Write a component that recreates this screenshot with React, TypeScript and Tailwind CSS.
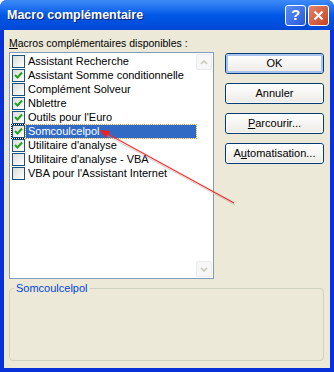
import React from "react";

const items = [
  { label: "Assistant Recherche", checked: false },
  { label: "Assistant Somme conditionnelle", checked: true },
  { label: "Complément Solveur", checked: false },
  { label: "Nblettre", checked: true },
  { label: "Outils pour l'Euro", checked: true },
  { label: "Somcoulcelpol", checked: true, selected: true },
  { label: "Utilitaire d'analyse", checked: true },
  { label: "Utilitaire d'analyse - VBA", checked: false },
  { label: "VBA pour l'Assistant Internet", checked: false },
];

function CheckBox({ checked }: { checked: boolean }) {
  return (
    <div className="w-[13px] h-[13px] border border-[#1c5180] bg-gradient-to-br from-[#dcdcd7] to-white flex items-center justify-center shrink-0">
      {checked && (
        <svg width="9" height="9" viewBox="0 0 9 9">
          <path d="M1 4 L3.5 6.5 L8 1.5" stroke="#21a121" strokeWidth="2" fill="none" />
        </svg>
      )}
    </div>
  );
}

function ScrollArrow({ up }: { up: boolean }) {
  return (
    <div className="w-[16px] h-[16px] rounded-[2px] border border-[#e8ebef] bg-[#f7f7f7] flex items-center justify-center">
      <svg width="8" height="5" viewBox="0 0 8 5">
        <path d={up ? "M1 4 L4 1 L7 4" : "M1 1 L4 4 L7 1"} stroke="#c9c7ba" strokeWidth="1.6" fill="none" />
      </svg>
    </div>
  );
}

function XpButton({ children, isDefault }: { children: React.ReactNode; isDefault?: boolean }) {
  return (
    <div className="w-[99px] h-[21px] rounded-[3px] border border-[#003c74] bg-gradient-to-b from-white to-[#ecebe6] flex items-center justify-center text-black">
      <div
        className={`w-full h-full rounded-[2px] flex items-center justify-center ${
          isDefault ? "border-2 border-[#a8c3ef]" : "border border-white/60"
        }`}
      >
        {children}
      </div>
    </div>
  );
}

export default function App() {
  return (
    <div
      className="relative w-[334px] h-[372px] flex flex-col bg-[#0831d9] rounded-t-[7px] overflow-hidden text-[11px] text-black"
      style={{ fontFamily: '"Liberation Sans", Arial, sans-serif' }}
    >
      {/* Title bar */}
      <div className="h-[30px] shrink-0 bg-gradient-to-b from-[#3d8bf8] via-[#0058e6] to-[#0047d5] flex items-center pl-[7px] pr-[5px]">
        <span className="text-white font-bold text-[12.5px] [text-shadow:1px_1px_0_#0a1f6e]">
          Macro complémentaire
        </span>
        <div className="ml-auto flex gap-[2px]">
          <div className="w-[21px] h-[21px] rounded-[3px] border border-white bg-gradient-to-br from-[#5b8df5] to-[#2759d8] flex items-center justify-center text-white font-bold text-[15px]">
            ?
          </div>
          <div className="w-[21px] h-[21px] rounded-[3px] border border-white bg-gradient-to-br from-[#e4836a] to-[#c4421d] flex items-center justify-center">
            <svg width="11" height="11" viewBox="0 0 11 11">
              <path d="M1.5 1.5 L9.5 9.5 M9.5 1.5 L1.5 9.5" stroke="white" strokeWidth="2" />
            </svg>
          </div>
        </div>
      </div>

      {/* Body */}
      <div className="flex-1 mx-[4px] mb-[4px] bg-[#ece9d8] flex flex-col">
        <div className="flex">
          <div className="pl-[5px] pt-[6px] flex flex-col">
            <div className="h-[16px] leading-[14px] text-[10.5px]">
              <span className="underline">M</span>acros complémentaires disponibles :
            </div>
            <div className="w-[205px] h-[227px] border border-[#7f9db9] bg-white flex">
              <div className="flex-1 pt-[1px] pl-[2px] flex flex-col">
                {items.map((it) => (
                  <div key={it.label} className="h-[14px] flex items-center">
                    <div className={it.selected ? "outline outline-1 outline-dotted outline-black" : ""}>
                      <CheckBox checked={it.checked} />
                    </div>
                    <div
                      className={`ml-[1px] pl-[2px] h-[13px] leading-[13px] flex-1 ${
                        it.selected ? "bg-[#316ac5] text-white outline outline-1 outline-dotted outline-[#c8a050]" : ""
                      }`}
                    >
                      {it.label}
                    </div>
                  </div>
                ))}
              </div>
              <div className="w-[17px] flex flex-col justify-between py-[1px] pr-[1px]">
                <ScrollArrow up />
                <ScrollArrow up={false} />
              </div>
            </div>
          </div>
          <div className="ml-[11px] pt-[23px] flex flex-col gap-[9px]">
            <XpButton isDefault>OK</XpButton>
            <XpButton>Annuler</XpButton>
            <XpButton>
              <span>
                <span className="underline">P</span>arcourir...
              </span>
            </XpButton>
            <XpButton>
              <span>
                A<span className="underline">u</span>tomatisation...
              </span>
            </XpButton>
          </div>
        </div>

        {/* Group box */}
        <div className="relative ml-[5px] mr-[6px] mt-[9px] h-[73px] border border-[#d0d0bf] rounded-[4px]">
          <span className="absolute -top-[8px] left-[4px] px-[2px] bg-[#ece9d8] text-[#0046d5] leading-[14px]">
            Somcoulcelpol
          </span>
        </div>
      </div>

      {/* Red annotation arrow */}
      <svg className="absolute left-0 top-0 pointer-events-none" width="334" height="372">
        <line x1="235" y1="205" x2="106" y2="135" stroke="#b8b4a8" strokeWidth="1" opacity="0.6" />
        <line x1="234" y1="203" x2="106" y2="133" stroke="#ff2a2a" strokeWidth="1.2" />
        <polygon points="100,130 110,131 106,138" fill="#ff1a1a" />
      </svg>
    </div>
  );
}
